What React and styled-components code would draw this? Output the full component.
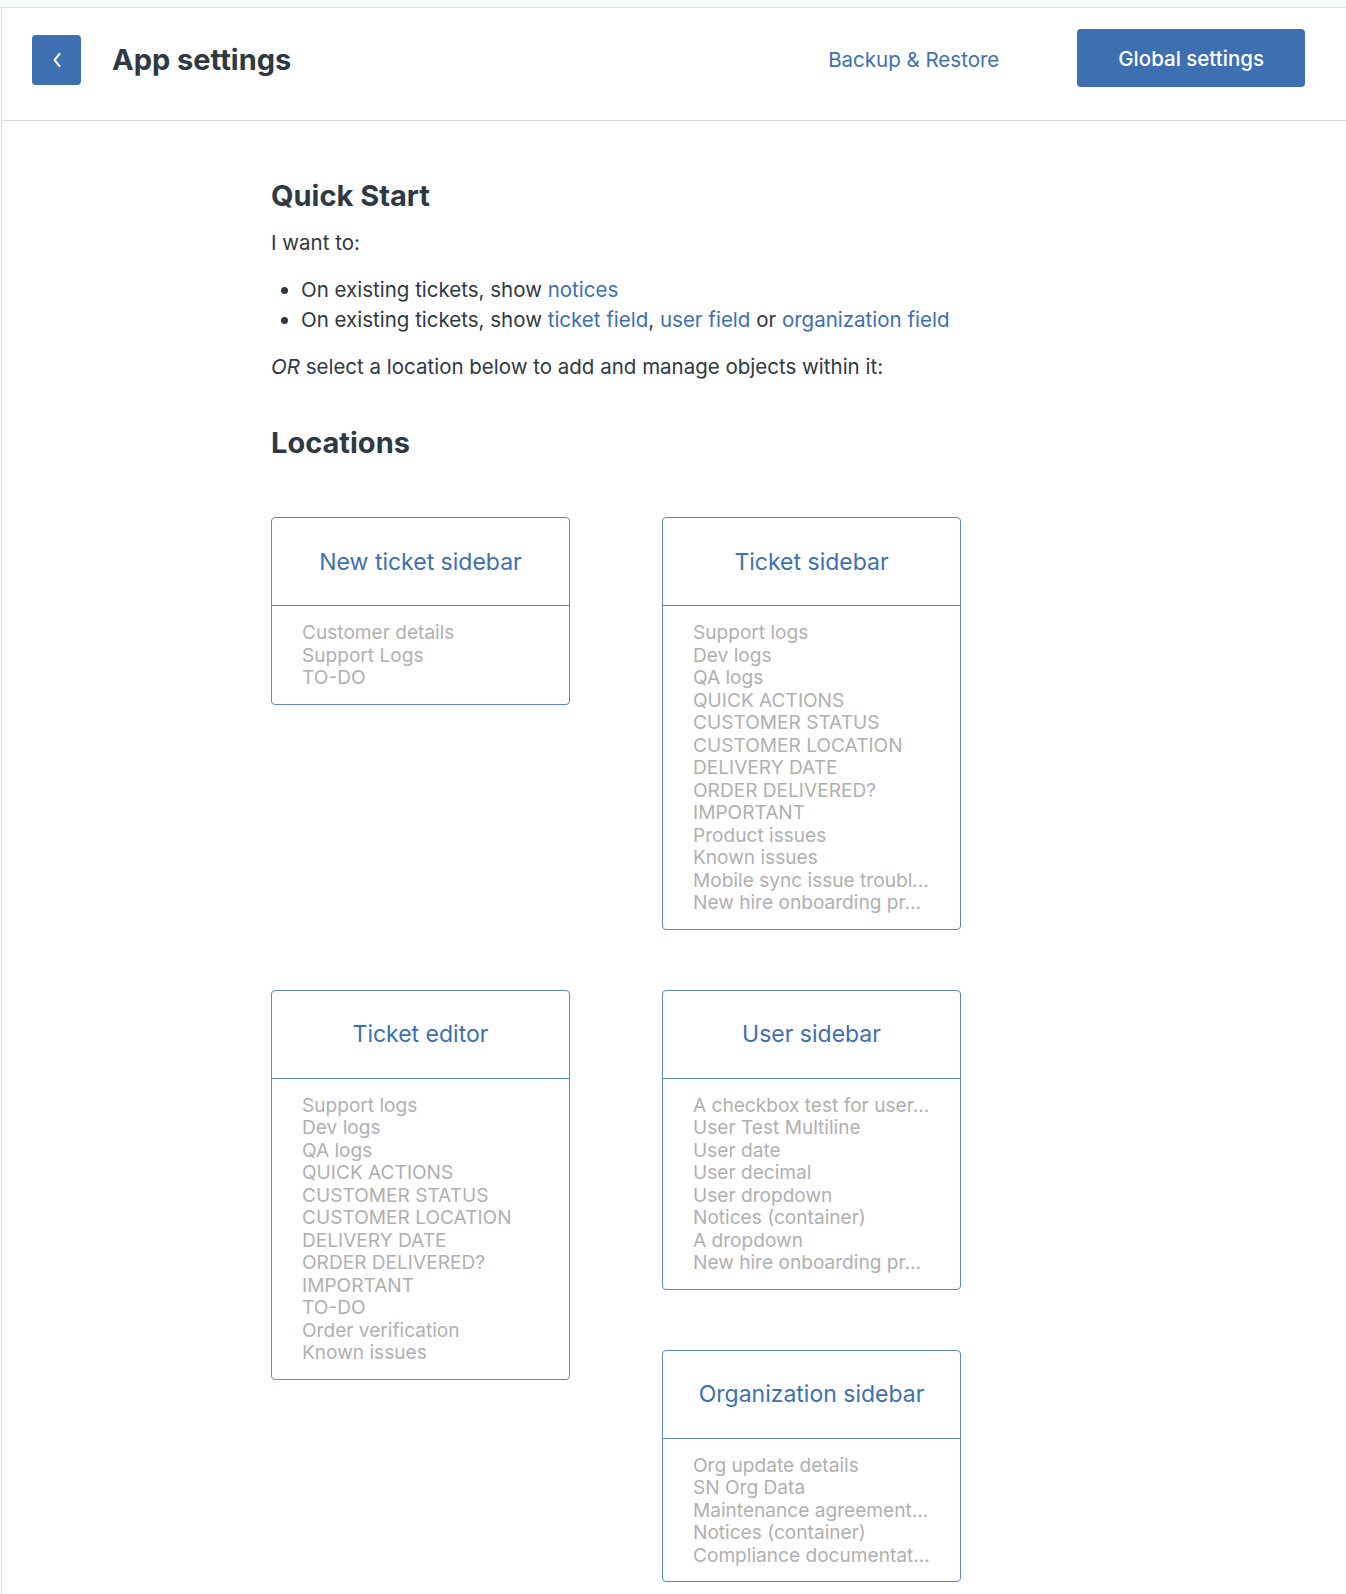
import React from 'react';
import styled, { createGlobalStyle } from 'styled-components';

const GlobalStyle = createGlobalStyle`
  body {
    margin: 0;
    background: #fff;
    font-family: Inter, "Noto Sans", sans-serif;
    color: #2f3941;
  }
`;

// styles
const TopStrip = styled.div`
  height: 7px;
  background: #f8f9f9;
  border-bottom: 1px solid #d8dcde;
`;
const Frame = styled.div`
  margin-left: 1px;
  min-height: 1586px;
  border-left: 1px solid #d8dcde;
`;
const Header = styled.header`
  display: flex;
  align-items: center;
  box-sizing: border-box;
  height: 113px;
  padding: 0 41px 9px 30px;
  border-bottom: 1px solid #d8dcde;
`;
const BackButton = styled.button`
  display: flex;
  align-items: center;
  justify-content: center;
  width: 49px;
  height: 50px;
  padding: 0;
  margin-top: 1px;

  background: #3d6fb1;
  border: none;
  border-radius: 4px;
`;
const Title = styled.h1`
  margin: 0 0 0 31px;
  font-size: 29px;
  font-weight: 700;
`;
const Spacer = styled.div`
  flex: 1;
`;
const TextLink = styled.a`
  color: #3d6fb1;
  font-size: ${props => props.size || 'inherit'};
  text-decoration: none;
`;
const PrimaryButton = styled.button`
  height: 58px;
  margin: 0 0 3px 78px;
  padding: 0 41px;

  color: #fff;
  font-family: inherit;
  font-size: 20.5px;
  font-weight: 500;

  background: #3d6fb1;
  border: none;
  border-radius: 4px;
`;
const Main = styled.main`
  padding: 57px 0 40px 269px;
`;
const Heading = styled.h2`
  margin: ${props => props.top || 0} 0 0;
  font-size: 29px;
  line-height: 36px;
  font-weight: 700;
`;
const Para = styled.p`
  margin: ${props => props.top || '17px'} 0 0;
  font-size: 20.5px;
  line-height: 30px;
`;
const Bullets = styled.ul`
  margin: 17px 0 0;
  padding-left: 30px;
  font-size: 20.5px;
  line-height: 30px;
`;
const Grid = styled.div`
  display: grid;
  grid-template-columns: 299px 299px;
  column-gap: 92px;
  row-gap: 60px;
  align-items: start;
  margin-top: 56px;
`;
const Card = styled.div`
  grid-row: ${props => (props.tall ? 'span 2' : 'auto')};
  border: 1px solid #5a89c3;
  border-radius: 4px;
`;
const CardHead = styled.div`
  display: flex;
  align-items: center;
  justify-content: center;
  height: 87px;

  color: #3d6fb1;
  font-size: 23px;

  border-bottom: 1px solid #5a89c3;
`;
const CardList = styled.ul`
  list-style: none;
  margin: 0;
  padding: 15px 16px 15px 30px;
`;
const CardItem = styled.li`
  overflow: hidden;
  color: #b0b0b0;
  font-size: 19.1px;
  line-height: 22.5px;
  white-space: nowrap;
  text-overflow: ellipsis;
`;

const locations = [
  {
    id: 'new-ticket',
    name: 'New ticket sidebar',
    items: ['Customer details', 'Support Logs', 'TO-DO'],
  },
  {
    id: 'ticket',
    name: 'Ticket sidebar',
    items: [
      'Support logs',
      'Dev logs',
      'QA logs',
      'QUICK ACTIONS',
      'CUSTOMER STATUS',
      'CUSTOMER LOCATION',
      'DELIVERY DATE',
      'ORDER DELIVERED?',
      'IMPORTANT',
      'Product issues',
      'Known issues',
      'Mobile sync issue troubl…',
      'New hire onboarding pr…',
    ],
  },
  {
    id: 'editor',
    name: 'Ticket editor',
    tall: true,
    items: [
      'Support logs',
      'Dev logs',
      'QA logs',
      'QUICK ACTIONS',
      'CUSTOMER STATUS',
      'CUSTOMER LOCATION',
      'DELIVERY DATE',
      'ORDER DELIVERED?',
      'IMPORTANT',
      'TO-DO',
      'Order verification',
      'Known issues',
    ],
  },
  {
    id: 'user',
    name: 'User sidebar',
    items: [
      'A checkbox test for user…',
      'User Test Multiline',
      'User date',
      'User decimal',
      'User dropdown',
      'Notices (container)',
      'A dropdown',
      'New hire onboarding pr…',
    ],
  },
  {
    id: 'org',
    name: 'Organization sidebar',
    items: [
      'Org update details',
      'SN Org Data',
      'Maintenance agreement…',
      'Notices (container)',
      'Compliance documentat…',
    ],
  },
];

const Chevron = () => (
  <svg width="10" height="16" viewBox="0 0 10 16" fill="none">
    <polyline
      points="7.5,2 2.5,8 7.5,14"
      stroke="#fff"
      strokeWidth="2"
      strokeLinecap="round"
      strokeLinejoin="round"
    />
  </svg>
);

const LocationCard = ({ name, items, tall }) => (
  <Card tall={tall}>
    <CardHead>{name}</CardHead>
    <CardList>
      {items.map((item, i) => (
        <CardItem key={i}>{item}</CardItem>
      ))}
    </CardList>
  </Card>
);

export default function App() {
  return (
    <>
      <GlobalStyle />
      <TopStrip />
      <Frame>
        <Header>
          <BackButton aria-label="Back">
            <Chevron />
          </BackButton>
          <Title>App settings</Title>
          <Spacer />
          <TextLink href="#" size="20.5px">
            Backup &amp; Restore
          </TextLink>
          <PrimaryButton>Global settings</PrimaryButton>
        </Header>
        <Main>
          <Heading>Quick Start</Heading>
          <Para top="14px">I want to:</Para>
          <Bullets>
            <li>
              On existing tickets, show <TextLink href="#">notices</TextLink>
            </li>
            <li>
              On existing tickets, show <TextLink href="#">ticket field</TextLink>,{' '}
              <TextLink href="#">user field</TextLink> or{' '}
              <TextLink href="#">organization field</TextLink>
            </li>
          </Bullets>
          <Para>
            <em>OR</em> select a location below to add and manage objects within it:
          </Para>
          <Heading top="43px">Locations</Heading>
          <Grid>
            {locations.map(loc => (
              <LocationCard key={loc.id} {...loc} />
            ))}
          </Grid>
        </Main>
      </Frame>
    </>
  );
}
